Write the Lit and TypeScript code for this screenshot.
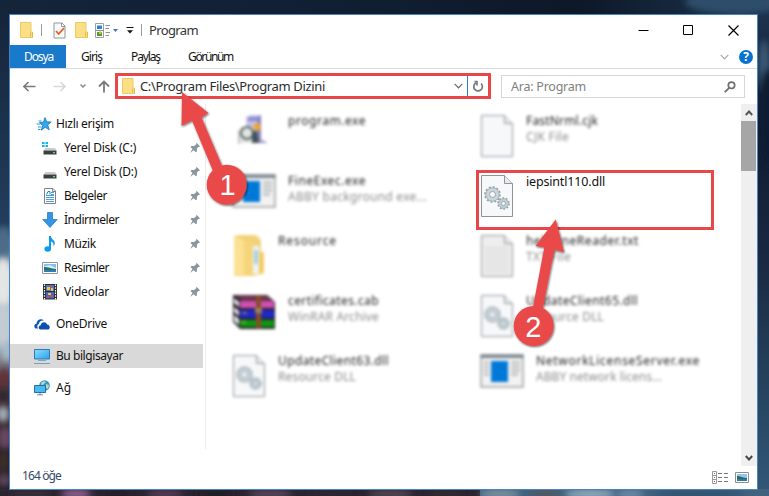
import { LitElement, html, css, svg, nothing } from "lit";
import { customElement, property } from "lit/decorators.js";

const svgBox = (w: number, h: number, body: unknown) =>
  html`<svg width=${w} height=${h} viewBox="0 0 ${w} ${h}" fill="none">${body}</svg>`;

const folderSmall = () => svgBox(13, 16, svg`
  <path d="M0.5 0.5h10.5v9.5h1.5v5.5h-12z" fill="#fbdf86" stroke="#eccb62"/>
  <path d="M10.5 10.5v4M12.5 10v5.5" stroke="#e3b947"/>`);

const icons: Record<string, () => unknown> = {
  star: () => svgBox(16, 16, svg`
    <path d="M9 1.500l1.700 4.300 4.500.2-3.500 2.900 1.500 4.900-4-2.500-3.900 2.900 1.200-4.700L3.500 6.500l4-.4z" fill="#38a8ec" stroke="#1877b8" stroke-width=".8"/>
    <path d="M2.500 5h3M.5 8h4M2 11h3M2 13.500h2.500" stroke="#2f9be0"/>`),
  diskWin: () => svgBox(16, 16, svg`
    <path d="M0 2h2.600v2H0zM3.500 2H6v2H3.500zM0 5h2.600v2H0zM3.500 5H6v2H3.500z" fill="#12b4ee"/>
    <path d="M3.500 8h9.500l1.500 2.500h-13z" fill="#c9cbcd"/><path d="M1.500 10.500h13v4h-13z" fill="#3c3f42"/><path d="M11 12h2v1.300h-2z" fill="#53e06b"/>`),
  disk: () => svgBox(16, 16, svg`
    <path d="M3.500 8h9.500l1.500 2.500h-13z" fill="#c9cbcd"/><path d="M1.500 10.500h13v4h-13z" fill="#3c3f42"/><path d="M11 12h2v1.300h-2z" fill="#53e06b"/>`),
  docs: () => svgBox(16, 16, svg`
    <path d="M2.500.5h8.500l2.500 2.500v12.500h-11z" fill="#fff" stroke="#7d8286"/>
    <path d="M9 4.500h3M9 6.500h3M4 9.500h8M4 11.500h8M4 13.500h8M4 7.500h8" stroke="#4a9fd6"/>
    <path d="M4.500 6.500l1.500-3h2v3" stroke="#1c7fc4"/><path d="M10.500.5v3h3" stroke="#7d8286"/>`),
  down: () => svgBox(16, 16, svg`<path d="M5.500.5h5v7h4.700L8 15.400.8 7.500h4.700z" fill="#3494e6" stroke="#2a7cc8" stroke-width=".8"/>`),
  music: () => svgBox(16, 16, svg`
    <path d="M7 0h1.800c.2 3 4 4 4 7 0 1.600-.7 2.500-1.300 3.200.4-2.800-.9-4-2.500-4.600V13H7z" fill="#0d9bf0"/><ellipse cx="5.700" cy="13" rx="3.300" ry="2.700" fill="#0d9bf0"/>`),
  pictures: () => svgBox(16, 16, svg`
    <path d="M.5 2.500h15v11H.5z" fill="#fff" stroke="#8f9498"/><path d="M2 4h12v8H2z" fill="#7fc0ef"/>
    <path d="M2 6.500l6-1.500 6 3v1H2z" fill="#d4ecfb"/><path d="M2 7c3-.5 6 1.500 12 2v1H2z" fill="#2f6d6a"/><path d="M2 10h12v2H2z" fill="#2f7fae"/>`),
  video: () => svgBox(16, 16, svg`
    <path d="M1 0h14v15.500H1z" fill="#2b2b2b"/><path d="M4 1h8v6H4z" fill="#4a74d8"/><path d="M4 8h8v6.500H4z" fill="#3d68c8"/>
    <path d="M5 3h3v3H5zM9 4h2v3H9zM6 9h3v2H6z" fill="#f0c53a"/><path d="M8 2h2v2H8zM8 11h3v2H8zM5 12h2v2H5z" fill="#d04a4a"/>
    <path d="M2.500.5v15M13.500.5v15" stroke="#fff" stroke-width="1.200" stroke-dasharray="1.500 1.200"/>`),
  cloud: () => svgBox(16, 16, svg`
    <path d="M1.500 12.500C-.6 11 .3 8 2.500 7.800 2.500 4 7 1.800 9.800 4.500 7 4 5 5.500 5 8c-2 .5-2 3-1 4.500z" fill="#0b57b7"/>
    <path d="M6.500 13.500c-2.600-.4-2.300-4 .2-4.200.3-3.500 5.300-4.300 6.300-.8 2.800-.2 3.700 3.800 1.500 5z" fill="#0d4fae"/>`),
  computer: () => svgBox(16, 16, svg`
    <defs><linearGradient id="scr" x1="0" y1="0" x2="1" y2="1"><stop stop-color="#8fdcff"/><stop offset="1" stop-color="#2aa2ee"/></linearGradient></defs>
    <path d="M.5 1.500h15v9.500H.5z" fill="url(#scr)" stroke="#2b7db1"/><path d="M4 12.500h8" stroke="#8da5b5"/><path d="M0 15.500h16" stroke="#7f9cb3"/>`),
  network: () => svgBox(16, 16, svg`
    <circle cx="10.500" cy="5.500" r="5.300" fill="#3d93bd"/><path d="M7 3c2-2.500 4-2 5-1L9.500 4.500 7.500 6zM12 4l3 1-1 4-2-1z" fill="#a8dcc9"/>
    <path d="M.5 5.500h11v7H.5z" fill="#49b9f3" stroke="#256f9f"/><path d="M3 14.800h6M6 13v2" stroke="#6d8ba0"/>`),
};

const pin = () => svgBox(12, 12, svg`<path d="M7.500.8l3.800 3.600-1.600.4-1.900 2 .2 2.500-1.200 1L4.700 8.200 1 11l2.500-3.900L1.500 5l1-1.100 2.600.2 2-1.900z" fill="#8b98a1"/>`);

const paper = (fill = "#f7f8f9") => svg`
  <path d="M1.500 2.500h23l8 8v33h-31z" fill=${fill} stroke="#8f9396"/>
  <path d="M24.500 2.500v8h8" fill="#e8eaeb" stroke="#8f9396"/>`;

const gears = svg`
  <circle cx="12.500" cy="21.500" r="7.300" stroke="#8f9fa8" stroke-width="2" stroke-dasharray="2 1.820"/>
  <circle cx="12.500" cy="21.500" r="5" stroke="#cbd5da" stroke-width="4"/>
  <circle cx="12.500" cy="21.500" r="6.700" stroke="#95a4ad" stroke-width=".7"/><circle cx="12.500" cy="21.500" r="3" stroke="#84959f" stroke-width=".8"/>
  <circle cx="23.500" cy="30.500" r="5.400" stroke="#8f9fa8" stroke-width="1.800" stroke-dasharray="1.700 1.690"/>
  <circle cx="23.500" cy="30.500" r="3.600" stroke="#c3ced4" stroke-width="3"/>
  <circle cx="23.500" cy="30.500" r="4.900" stroke="#95a4ad" stroke-width=".6"/><circle cx="23.500" cy="30.500" r="2" stroke="#84959f" stroke-width=".7"/>`;

const fileIcons: Record<string, () => unknown> = {
  setup: () => svgBox(44, 44, svg`
    <path d="M14 4l5-2h10v20H15z" fill="#c3c1e6"/><path d="M16 4h12v4H16z" fill="#8d8bd0"/><path d="M26 4l3-2v25l-4 2z" fill="#8583b8"/>
    <path d="M14 27h16l6 3H18z" fill="#9793bd"/><path d="M8 14h14v16H8z" fill="#dfe5e3"/><circle cx="15" cy="20" r="6" stroke="#596660" stroke-width="2"/>
    <path d="M20 18h5l2 12h-7z" fill="#43515c"/><circle cx="25" cy="14" r="3.500" fill="#f1a529"/><path d="M7 17v14" stroke="#888"/>`),
  app: () => svgBox(44, 44, svg`
    <path d="M1 2h42v32H1z" fill="#f2f2f2" stroke="#9c9ea0" stroke-width="1.500"/><path d="M.5 1.500h43v3.500H.5z" fill="#7d8890"/>
    <path d="M11 8h17v21H11z" fill="#0078d7"/><path d="M4 9.500h5M4 13.500h5M4 17.500h5M4 21.500h5M31 9.500h9M31 13.500h9M31 17.500h9M31 21.500h7" stroke="#b3b3b3" stroke-width="2"/>`),
  folder: () => svgBox(34, 44, svg`
    <path d="M2 3l6-1h16l5 5v12l3 1v20l-10 3H2z" fill="#f2d279"/><path d="M2 3l10 5v34H2z" fill="#fbe193"/><path d="M12 8h9v33l-9 2z" fill="#f5d47a"/>
    <path d="M21 13h6v28h-6z" fill="#eef3f5"/><path d="M22.500 17h3v14h-3z" fill="#8cc9e6"/><path d="M27 19h4v22h-4z" fill="#f3c95a"/>`),
  rar: () => svgBox(44, 44, svg`
    <path d="M1 2h34l8 7v27H8L1 29z" fill="#27222b"/><path d="M3 2.500h31l7 5H10z" fill="#733650"/>
    <path d="M8 8h34v7H8z" fill="#cf50b1"/><path d="M8 17h34v8H8z" fill="#2027c8"/><path d="M8 27h34v7H8z" fill="#0d9710"/>
    <path d="M2 5l5 4v5l-5-4zM2 14l5 4v5l-5-4zM2 22l5 4v6l-5-4z" fill="#e4e3ee"/><path d="M24 3h5v32h-5z" fill="#894c26"/><path d="M23 15h7v5h-7z" fill="#9c8060"/><path d="M10 20h5M9 29h5" stroke="#d8c443"/>`),
  dll: () => svgBox(34, 44, svg`${paper()}${gears}`),
  blank: () => svgBox(34, 44, paper()),
  text: () => svgBox(34, 44, svg`${paper("#eee")}<path d="M5 14.500h24M5 18.500h24M5 22.500h24M5 26.500h24M5 30.500h24M5 34.500h24M5 38.500h24" stroke="#dadada" stroke-width="1.500"/>`),
};

@customElement("sized-label")
class SizedLabel extends LitElement {
  static styles = css`
    :host { display: inline-block; white-space: pre; }
  `;
  @property() text = "";
  @property({ type: Number }) span = 0;

  render() {
    return html`<span>${this.text}</span>`;
  }

  updated() {
    const el = this.renderRoot.querySelector("span") as HTMLElement;
    el.style.letterSpacing = "0";
    const natural = el.getBoundingClientRect().width;
    el.style.letterSpacing = `${(this.span - natural) / this.text.length}px`;
  }
}

const label = (text: string, span: number) => html`<sized-label .text=${text} .span=${span}></sized-label>`;

interface Place { icon: string; text: string; span: number; child?: boolean; selected?: boolean; }
const groups: Place[][] = [
  [
    { icon: "star", text: "Hızlı erişim", span: 58 },
    { icon: "diskWin", text: "Yerel Disk (C:)", span: 72, child: true },
    { icon: "disk", text: "Yerel Disk (D:)", span: 73, child: true },
    { icon: "docs", text: "Belgeler", span: 43, child: true },
    { icon: "down", text: "İndirmeler", span: 55, child: true },
    { icon: "music", text: "Müzik", span: 32, child: true },
    { icon: "pictures", text: "Resimler", span: 45, child: true },
    { icon: "video", text: "Videolar", span: 45, child: true },
  ],
  [{ icon: "cloud", text: "OneDrive", span: 51 }],
  [{ icon: "computer", text: "Bu bilgisayar", span: 67, selected: true }],
  [{ icon: "network", text: "Ağ", span: 15 }],
];

interface Entry { icon: string; name: string; span: number; kind?: string; kindSpan?: number; marked?: boolean; }
const files: Entry[] = [
  { icon: "setup", name: "program.exe", span: 78 },
  { icon: "blank", name: "FastNrml.cjk", span: 72, kind: "CJK File", kindSpan: 43 },
  { icon: "app", name: "FineExec.exe", span: 78, kind: "ABBY background exe...", kindSpan: 139 },
  { icon: "dll", name: "iepsintl110.dll", span: 79, marked: true },
  { icon: "folder", name: "Resource", span: 59 },
  { icon: "text", name: "helpfineReader.txt", span: 113, kind: "TXT File", kindSpan: 45 },
  { icon: "rar", name: "certificates.cab", span: 91, kind: "WinRAR Archive", kindSpan: 91 },
  { icon: "dll", name: "UpdateClient65.dll", span: 112, kind: "Resource DLL", kindSpan: 78 },
  { icon: "dll", name: "UpdateClient63.dll", span: 111, kind: "Resource DLL", kindSpan: 78 },
  { icon: "app", name: "NetworkLicenseServer.exe", span: 164, kind: "ABBY network licens...", kindSpan: 126 },
];

// Soft patches of the desktop wallpaper that show around the window: x, y, rx, ry, colour.
const patches: [number, number, number, number, string][] = [
  [735, 2, 50, 12, "#2f4d6b"], [764, 66, 6, 26, "#3a5876"], [769, 120, 12, 50, "#101d33"],
  [3, 245, 8, 18, "#4c6c88"], [3, 283, 10, 26, "#e3e6e4"], [3, 325, 10, 22, "#c3ccd2"],
  [7, 352, 5, 9, "#a8bccb"], [4, 378, 7, 9, "#643338"], [3, 396, 5, 5, "#2a2329"],
  [3, 414, 6, 8, "#a5b2b9"], [5, 438, 7, 11, "#6b4a63"], [3, 462, 7, 9, "#3b2f28"], [4, 480, 7, 7, "#5a4456"],
  [30, 494, 20, 4, "#3a2d38"], [76, 494, 15, 5, "#8a5f8e"], [118, 494, 14, 5, "#241f29"],
  [165, 494, 18, 4, "#56405a"], [215, 494, 20, 4, "#1f1b24"], [270, 494, 22, 4, "#5b4a5e"],
  [330, 494, 22, 4, "#2b2630"], [390, 494, 22, 4, "#594a55"], [445, 494, 18, 4, "#302a33"],
  [500, 494, 20, 4, "#8295a5"], [545, 494, 15, 4, "#54565f"], [590, 494, 25, 5, "#8fa9bd"],
  [630, 494, 14, 4, "#6f8ea8"], [700, 494, 45, 5, "#2f5371"],
];

@customElement("app-root")
class AppRoot extends LitElement {
  static styles = css`
    :host {
      display: block; position: relative; box-sizing: border-box; width: 769px; height: 496px;
      padding: 14px 11px 6px 9px; overflow: hidden;
      font: 12px/16px "Noto Sans", "Open Sans", sans-serif; color: #111;
    }
    svg { display: block; flex: none; }
    .wallpaper { position: absolute; left: 0; top: 0; }
    .window { position: relative; box-sizing: border-box; height: 476px; border: 1px solid #4c83c3; background: #fff; display: flex; flex-direction: column; }
    .title { height: 30px; display: flex; align-items: center; padding-left: 10px; }
    .sep { width: 1px; height: 12px; background: #9a9a9a; }
    .s1 { margin: 0 11px 0 8px; } .s2 { margin: 0 7px; }
    .g1 { margin-left: 9px; } .g2 { margin-left: 7px; } .g3 { margin-left: 3px; } .g4 { margin-left: 8px; }
    .caption { font-size: 13px; color: #333; }
    .controls { margin-left: auto; display: flex; gap: 34px; padding-right: 18px; }
    .tabs { height: 23px; display: flex; align-items: center; border-bottom: 1px solid #d9dbdd; }
    .tab { height: 23px; line-height: 23px; box-sizing: border-box; padding-left: 15px; }
    .file { width: 56px; padding-left: 14px; background: #1979ca; color: #fff; }
    .t2 { width: 50px; } .t3 { width: 57px; padding-left: 15px; } .t4 { padding-left: 15px; }
    .tools { margin-left: auto; display: flex; align-items: center; gap: 10px; padding-right: 4px; }
    .help { width: 14px; height: 14px; border-radius: 50%; background: #0873cf; color: #fff; font: bold 12px/14px "Noto Sans", sans-serif; text-align: center; }
    .nav { height: 35px; display: flex; align-items: flex-start; padding-left: 13px; }
    .arrows { display: flex; align-items: center; height: 34px; width: 92px; }
    .a2 { margin-left: 17px; } .a3 { margin-left: 14px; } .a4 { margin-left: 12px; }
    .address { box-sizing: border-box; width: 376px; height: 26px; margin-top: 4px; border: 3px solid #e84749; display: flex; align-items: center; padding-left: 4px; font-size: 13px; color: #2c2c2c; }
    .path { margin-left: 5px; }
    .drop { margin-left: auto; margin-right: 4px; }
    .refresh { box-sizing: border-box; height: 20px; width: 21px; border-left: 1px solid #2f7fc4; display: flex; align-items: center; justify-content: center; }
    .search { box-sizing: border-box; width: 244px; height: 23px; margin: 6px 0 0 10px; border: 1px solid #d6d6d6; padding: 0 8px 0 9px; display: flex; align-items: center; justify-content: space-between; color: #808080; }
    .search span { font-size: 12.500px; }
    .body { height: 362px; display: flex; }
    .places { box-sizing: border-box; width: 196px; height: 345px; border-right: 1px solid #ececec; padding-top: 8px; display: flex; flex-direction: column; gap: 8px; }
    .place { height: 24px; width: 193px; box-sizing: border-box; display: flex; align-items: center; gap: 6px; padding: 0 2px 0 24px; }
    .place.child { padding-left: 32px; }
    .place.selected { background: #d9d9d9; }
    .star { padding-left: 26px; gap: 4px; }
    .pin { margin-left: auto; }
    .files { flex: 1; display: grid; grid-template-columns: 248px 248px; grid-auto-rows: 60px; padding: 9px 0 0 26px; align-content: start; }
    .entry { position: relative; display: flex; align-items: flex-start; gap: 12px; }
    .entry.soft { filter: blur(1.400px); }
    .names { display: flex; flex-direction: column; font-size: 12px; color: #222; }
    .marked .names { padding-top: 1px; color: #111; font-size: 12.500px; }
    .kind { color: #8c8c8c; }
    .frame { position: absolute; left: -4px; top: -3px; box-sizing: border-box; width: 238px; height: 60px; border: 3px solid #e84749; }
    .scroll { width: 16px; background: #efefef; display: flex; flex-direction: column; align-items: center; }
    .scroll > svg { margin: 6px 0 5px; }
    .thumb { width: 15px; height: 50px; background: #a6a6a6; align-self: flex-start; }
    .end { margin: auto 0 5px; }
    .status { height: 23px; box-sizing: border-box; padding: 0 8px 3px 12px; display: flex; align-items: center; color: #34496b; }
    .modes { margin: 3px 0 0 auto; display: flex; align-items: center; gap: 7px; }
    .callouts { position: absolute; left: 0; top: 0; }
    .digit { font: 29px "Liberation Sans", Arial, sans-serif; }
  `;

  private place(p: Place) {
    return html`<div class="place ${p.child ? "child" : ""} ${p.selected ? "selected" : ""} ${p.icon === "star" ? "star" : ""}">
      ${icons[p.icon]()}${label(p.text, p.span)}${p.child ? html`<span class="pin">${pin()}</span>` : nothing}
    </div>`;
  }

  private entry(f: Entry) {
    return html`<div class="entry ${f.marked ? "marked" : "soft"}">
      ${fileIcons[f.icon]()}
      <div class="names">${label(f.name, f.span)}${f.kind ? html`<span class="kind">${label(f.kind, f.kindSpan ?? 0)}</span>` : nothing}</div>
      ${f.marked ? html`<div class="frame"></div>` : nothing}
    </div>`;
  }

  render() {
    return html`
      <svg class="wallpaper" width="769" height="496" viewBox="0 0 769 496">
        <defs>
          <linearGradient id="sky" x1="0" y1="0" x2="1" y2="0"><stop stop-color="#142439"/><stop offset=".5" stop-color="#101e32"/><stop offset=".75" stop-color="#0d1828"/><stop offset="1" stop-color="#1e3550"/></linearGradient>
          <linearGradient id="west" x1="0" y1="0" x2="0" y2="1"><stop stop-color="#142439"/><stop offset=".45" stop-color="#233d5b"/><stop offset=".55" stop-color="#a6b8c4"/><stop offset=".7" stop-color="#9fadb8"/><stop offset=".77" stop-color="#4a363e"/><stop offset="1" stop-color="#1c191f"/></linearGradient>
          <linearGradient id="east" x1="0" y1="0" x2="0" y2="1"><stop stop-color="#1e3550"/><stop offset=".25" stop-color="#101d33"/><stop offset=".5" stop-color="#18273f"/><stop offset=".75" stop-color="#24405a"/><stop offset="1" stop-color="#315977"/></linearGradient>
          <filter id="haze" x="-50%" y="-100%" width="200%" height="300%"><feGaussianBlur stdDeviation="3"/></filter>
        </defs>
        <rect width="769" height="496" fill="url(#sky)"/>
        <rect width="10" height="496" fill="url(#west)"/>
        <rect x="756" width="13" height="496" fill="url(#east)"/>
        <rect y="489" width="480" height="7" fill="#2a2430"/>
        <rect x="480" y="489" width="289" height="7" fill="#41627e"/>
        ${patches.map(([x, y, rx, ry, c]) => svg`<ellipse cx=${x} cy=${y} rx=${rx} ry=${ry} fill=${c} filter="url(#haze)"/>`)}
      </svg>
      <div class="window">
        <div class="title">
          ${folderSmall()}<span class="sep s1"></span>
          ${svgBox(13, 17, svg`<path d="M1 1h8l3 3v12H1z" fill="#f8f9fa" stroke="#92979b"/><path d="M8.500 1v3.500H12" stroke="#92979b"/><path d="M3 9l2.700 3L11 6" stroke="#ea5b25" stroke-width="1.800"/>`)}
          <span class="g1">${folderSmall()}</span>
          <span class="g2">${svgBox(15, 15, svg`<path d="M.5.5h8v14h-8z" fill="#fff" stroke="#9aa0a4"/><path d="M2 2.500h5v3.500H2z" fill="#2c82cf"/><path d="M2 9h5v4H2z" fill="#4b9a3b"/><path d="M4 8.500h2.500v2.500H4z" fill="#e1b72f"/><path d="M.5 7.500h8M10.500 2.500H15M10.500 5.500H14M10.500 9.500H15M10.500 12.500H14" stroke="#8a8f93"/>`)}</span>
          <span class="g3">${svgBox(5, 3, svg`<path d="M0 0h5L2.500 3z" fill="#3e73bb"/>`)}</span>
          <span class="g4">${svgBox(8, 7, svg`<path d="M.5.500h7" stroke="#111"/><path d="M1 3.300h6L4 6.500z" fill="#111"/>`)}</span>
          <span class="sep s2"></span>
          <span class="caption">${label("Program", 49)}</span>
          <div class="controls">
            ${svgBox(11, 11, svg`<path d="M.5 5.500H10.500" stroke="#000"/>`)}
            ${svgBox(11, 11, svg`<path d="M.5.5h9v9h-9z" stroke="#000"/>`)}
            ${svgBox(11, 11, svg`<path d="M.5.5l10 10M10.500.5l-10 10" stroke="#000" stroke-width="1.200"/>`)}
          </div>
        </div>
        <div class="tabs">
          <div class="tab file">${label("Dosya", 29)}</div>
          <div class="tab t2">${label("Giriş", 21)}</div>
          <div class="tab t3">${label("Paylaş", 29)}</div>
          <div class="tab t4">${label("Görünüm", 45)}</div>
          <div class="tools">
            ${svgBox(9, 6, svg`<path d="M.7.800l3.800 4 3.800-4" stroke="#a5a5a5" stroke-width="1.200"/>`)}
            <span class="help">?</span>
          </div>
        </div>
        <div class="nav">
          <div class="arrows">
            ${svgBox(13, 11, svg`<path d="M12.500 5.500H1M5.500 1L1 5.500 5.500 10" stroke="#7a7a7a" stroke-width="1.600"/>`)}
            <span class="a2">${svgBox(13, 11, svg`<path d="M.5 5.500H12M7.500 1L12 5.500 7.500 10" stroke="#d9d9d9" stroke-width="1.600"/>`)}</span>
            <span class="a3">${svgBox(6, 4, svg`<path d="M.5.5L3 3 5.500.5" stroke="#8a8a8a" stroke-width="1.500"/>`)}</span>
            <span class="a4">${svgBox(12, 13, svg`<path d="M6 12.500V1.500M1 6.500l5-5 5 5" stroke="#7a7a7a" stroke-width="1.800"/>`)}</span>
          </div>
          <div class="address">
            ${folderSmall()}<span class="path">${label("C:\\Program Files\\Program Dizini", 185)}</span>
            <span class="drop">${svgBox(9, 6, svg`<path d="M.7.800l3.800 4 3.800-4" stroke="#666" stroke-width="1.200"/>`)}</span>
            <span class="refresh">${svgBox(12, 12, svg`<path d="M9.100 3.500A4.300 4.300 0 1 1 4 2.800" stroke="#777" stroke-width="1.700"/><path d="M5.500 1.500h-3M5 1v4.500" stroke="#777" stroke-width="1.600"/>`)}</span>
          </div>
          <div class="search"><span>${label("Ara: Program", 75)}</span>
            ${svgBox(12, 12, svg`<circle cx="7.500" cy="4.300" r="3.200" stroke="#707070" stroke-width="1.700"/><path d="M5.200 6.800L.8 11.200" stroke="#707070" stroke-width="1.900"/>`)}
          </div>
        </div>
        <div class="body">
          <div class="places">${groups.map((g) => html`<div>${g.map((p) => this.place(p))}</div>`)}</div>
          <div class="files">${files.map((f) => this.entry(f))}</div>
          <div class="scroll">
            ${svgBox(8, 6, svg`<path d="M.8 5L4 1.500 7.200 5" stroke="#555" stroke-width="1.900"/>`)}
            <div class="thumb"></div>
            <span class="end">${svgBox(8, 6, svg`<path d="M.8 1L4 4.500 7.200 1" stroke="#444" stroke-width="1.900"/>`)}</span>
          </div>
        </div>
        <div class="status">
          ${label("164 öğe", 39)}
          <div class="modes">
            ${svgBox(16, 13, svg`<path d="M.5.5h4v12h-4zM.5 4.500h4M.5 8.500h4" stroke="#999"/><path d="M6 2.500h4M12 2.500h4M6 6.500h4M12 6.500h4M6 10.500h4M12 10.500h4" stroke="#777"/><path d="M2 2h1v1H2zM2 6h1v1H2z" fill="#4879a8"/><path d="M2 10h1v1H2z" fill="#d33"/>`)}
            ${svgBox(14, 11, svg`<path d="M.5.5h13v10H.5z" fill="#fff" stroke="#8a8f94"/><path d="M2 2h10v7H2z" fill="#8fc7ee"/><path d="M2 4c3 0 6 2 10 2v1H2z" fill="#2d6a60"/><path d="M2 7h10v2H2z" fill="#3276b0"/>`)}
          </div>
        </div>
      </div>
      <svg class="callouts" width="769" height="496" viewBox="0 0 769 496">
        <defs><filter id="sh" x="-20%" y="-20%" width="140%" height="140%"><feDropShadow dx="0.800" dy="1" stdDeviation="1.300" flood-color="#000" flood-opacity=".6"/></filter></defs>
        <g fill="#e94a4a" filter="url(#sh)">
          <path d="M182 92L208.500 113 201.500 117.500 223 168 213 171 192 120.500 181.500 126z"/>
          <circle cx="226.700" cy="184.700" r="20"/>
          <path d="M555.700 219.500L564 252 554.300 250 542.700 309 533 307 544.300 247.500 535.500 246z"/>
          <circle cx="533.700" cy="326" r="20"/>
        </g>
        <g class="digit" fill="#fff" text-anchor="middle"><text x="227.500" y="194.500">1</text><text x="533.200" y="336.500">2</text></g>
      </svg>`;
  }
}
